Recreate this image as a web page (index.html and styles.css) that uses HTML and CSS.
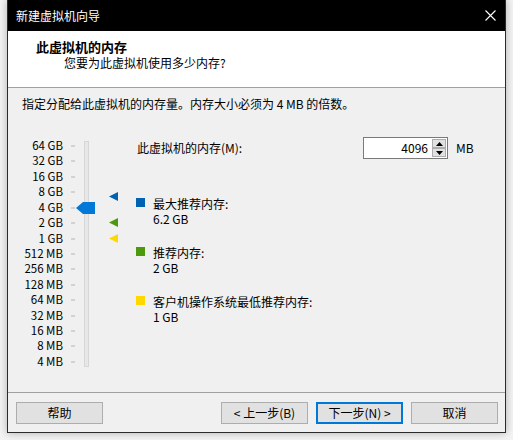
FILE: index.html
```html
<!DOCTYPE html>
<html lang="zh-CN">
<head>
<meta charset="utf-8">
<title>新建虚拟机向导</title>
<link rel="stylesheet" href="styles.css">
</head>
<body>
<div class="window">
  <div class="titlebar">
    <span class="title">新建虚拟机向导</span>
    <svg class="close" width="11" height="11" viewBox="0 0 11 11"><path d="M0.5 0.5L10.5 10.5M10.5 0.5L0.5 10.5" stroke="#fff" stroke-width="1.1" fill="none"/></svg>
  </div>
  <div class="header">
    <div class="h-title">此虚拟机的内存</div>
    <div class="h-sub">您要为此虚拟机使用多少内存?</div>
  </div>
  <div class="content">
    <div class="desc">指定分配给此虚拟机的内存量。内存大小必须为 4 MB 的倍数。</div>
    <div class="main">
      <div class="slider">
        <div class="labels">
          <div>64 GB</div><div>32 GB</div><div>16 GB</div><div>8 GB</div><div>4 GB</div>
          <div>2 GB</div><div>1 GB</div><div>512 MB</div><div>256 MB</div><div>128 MB</div>
          <div>64 MB</div><div>32 MB</div><div>16 MB</div><div>8 MB</div><div>4 MB</div>
        </div>
        <div class="ticks">
          <i></i><i></i><i></i><i></i><i></i><i></i><i></i><i></i><i></i><i></i><i></i><i></i><i></i><i></i><i></i>
        </div>
        <div class="track"></div>
        <svg class="thumb" width="19" height="12" viewBox="0 0 19 12"><polygon points="0,6 7,0 19,0 19,12 7,12" fill="#0078d7"/></svg>
        <svg class="marker m-max" width="9" height="9" viewBox="0 0 9 9"><polygon points="0,4.5 9,0 9,9" fill="#0063b1"/></svg>
        <svg class="marker m-rec" width="9" height="9" viewBox="0 0 9 9"><polygon points="0,4.5 9,0 9,9" fill="#4c9a0c"/></svg>
        <svg class="marker m-min" width="9" height="9" viewBox="0 0 9 9"><polygon points="0,4.5 9,0 9,9" fill="#ffd800"/></svg>
      </div>
      <div class="info">
        <div class="mem-row">
          <span class="mem-label">此虚拟机的内存(M):</span>
          <div class="spin">
            <div class="spin-input">4096</div>
            <div class="spin-btns">
              <div class="spin-btn"><svg width="7" height="4" viewBox="0 0 7 4"><polygon points="0,4 3.5,0 7,4" fill="#000"/></svg></div>
              <div class="spin-btn"><svg width="7" height="4" viewBox="0 0 7 4"><polygon points="0,0 7,0 3.5,4" fill="#000"/></svg></div>
            </div>
          </div>
          <span class="unit">MB</span>
        </div>
        <div class="legend">
          <span class="sq sq-max"></span>
          <div class="legend-text"><div>最大推荐内存:</div><div>6.2 GB</div></div>
        </div>
        <div class="legend">
          <span class="sq sq-rec"></span>
          <div class="legend-text"><div>推荐内存:</div><div>2 GB</div></div>
        </div>
        <div class="legend">
          <span class="sq sq-min"></span>
          <div class="legend-text"><div>客户机操作系统最低推荐内存:</div><div>1 GB</div></div>
        </div>
      </div>
    </div>
  </div>
  <div class="footer">
    <button class="btn">帮助</button>
    <span class="spacer"></span>
    <button class="btn">&lt; 上一步(B)</button>
    <button class="btn btn-default">下一步(N) &gt;</button>
    <button class="btn">取消</button>
  </div>
</div>
</body>
</html>
```
FILE: styles.css
```css
* { box-sizing: border-box; }
html, body { margin: 0; padding: 0; }
body {
  background: #f3f3f3;
  font-family: "Noto Sans CJK SC", "Noto Sans", sans-serif;
  font-size: 12px;
  color: #000;
  width: 513px;
  height: 440px;
  overflow: hidden;
}
.window {
  margin-left: 7px;
  width: 499px;
  height: 433px;
  border: 1px solid #2b2b2b;
  border-top: 0;
  background: #f0f0f0;
  display: flex;
  flex-direction: column;
  box-shadow: 0 0 8px rgba(0,0,0,0.28);
}
.titlebar {
  height: 31px;
  flex: none;
  background: #000;
  color: #fff;
  display: flex;
  align-items: center;
  justify-content: space-between;
  padding-left: 8px;
  padding-right: 9px;
}
.title { line-height: 16px; }
.close { display: block; }
.header {
  height: 57px;
  flex: none;
  background: #fff;
  border-bottom: 1px solid #a0a0a0;
  padding-top: 7px;
}
.h-title {
  font-weight: bold;
  font-size: 13px;
  line-height: 17px;
  padding-left: 28px;
}
.h-sub {
  line-height: 16px;
  padding-left: 56px;
}
.content {
  flex: 1;
  display: flex;
  flex-direction: column;
}
.desc {
  padding: 8px 0 0 14px;
  line-height: 16px;
}
.main {
  display: flex;
}
.slider {
  position: relative;
  width: 128px;
  flex: none;
  display: flex;
  padding-top: 26px;
}
.labels {
  width: 55px;
  text-align: right;
}
.labels div {
  height: 15.43px;
  line-height: 15.43px;
  font-size: 11.5px;
}
.ticks {
  margin-left: 8px;
  width: 4px;
}
.ticks i {
  display: block;
  height: 15.43px;
  position: relative;
}
.ticks i::after {
  content: "";
  display: block;
  height: 1px;
  background: #b4b4b4;
  transform: translateY(7.5px);
}
.track {
  margin-left: 9px;
  margin-top: 3px;
  width: 5px;
  height: 226px;
  background: #e7e7e7;
  border: 1px solid #d6d6d6;
}
.thumb { position: absolute; left: 68px; top: 90px; }
.marker { position: absolute; left: 101px; }
.m-max { top: 80px; }
.m-rec { top: 106px; }
.m-min { top: 122px; }
.info {
  padding-top: 25px;
}
.mem-row {
  display: flex;
  align-items: center;
  height: 22px;
  padding-left: 1px;
}
.mem-label {
  width: 226px;
  line-height: 16px;
}
.spin {
  display: flex;
  height: 22px;
}
.spin-input {
  width: 69px;
  height: 22px;
  background: #fff;
  border: 1px solid #7a7a7a;
  border-right: 0;
  text-align: right;
  padding-right: 4px;
  line-height: 20px;
}
.spin-btns {
  width: 16px;
  display: flex;
  flex-direction: column;
  background: #fff;
  border: 1px solid #7a7a7a;
  border-left: 0;
  padding: 1px 1px 1px 0;
}
.spin-btn {
  flex: 1;
  background: #e1e1e1;
  border: 1px solid #adadad;
  display: flex;
  align-items: center;
  justify-content: center;
}
.spin-btn svg { display: block; }
.unit {
  margin-left: 8px;
  line-height: 16px;
}
.legend {
  display: flex;
  align-items: flex-start;
  margin-top: 19px;
}
.mem-row + .legend { margin-top: 36.5px; }
.sq {
  width: 9px;
  height: 9px;
  margin-top: 2.5px;
  flex: none;
}
.sq-max { background: #0063b1; }
.sq-rec { background: #4c9a0c; }
.sq-min { background: #ffd800; }
.legend-text {
  margin-left: 8px;
  line-height: 15px;
}
.footer {
  height: 40px;
  flex: none;
  border-top: 1px solid #a0a0a0;
  display: flex;
  align-items: flex-start;
  padding: 9px 7px 0 8px;
  gap: 8px;
}
.spacer { flex: 1; }
.btn {
  width: 87px;
  height: 22px;
  background: #e1e1e1;
  border: 1px solid #adadad;
  font-family: "Noto Sans CJK SC", "Noto Sans", sans-serif;
  font-size: 12px;
  color: #000;
  padding: 0;
  line-height: 18px;
}
.btn-default {
  border: 2px solid #0078d7;
}
```
